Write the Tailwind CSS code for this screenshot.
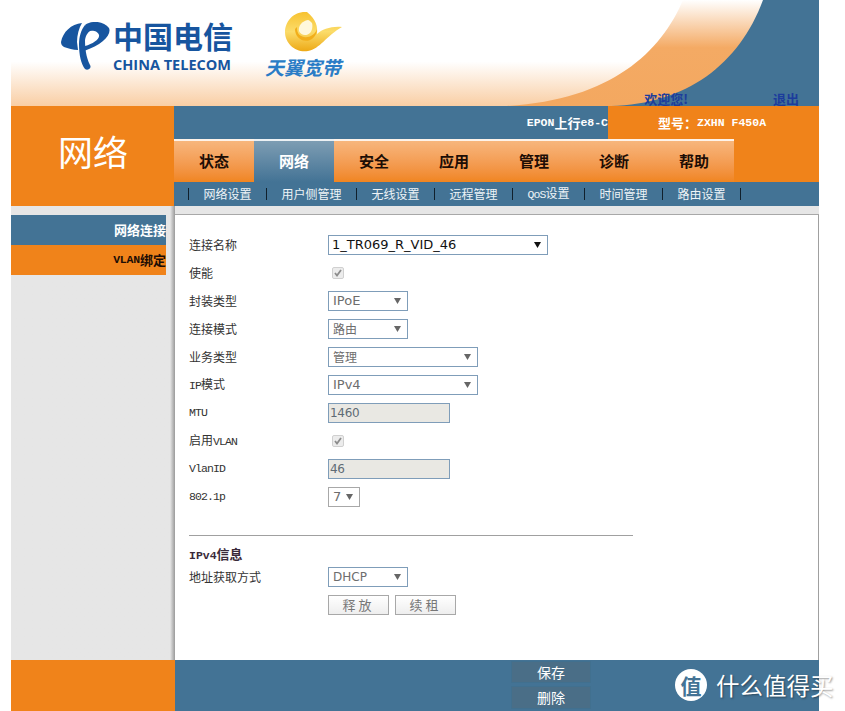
<!DOCTYPE html>
<html lang="zh-CN">

<head>
    <meta charset="UTF-8" />
    <title>网络连接</title>
    <script src="https://cdn.jsdelivr.net/npm/@tailwindcss/browser@4"></script>
</head>

<body class="bg-white h-[711px] overflow-hidden relative font-['Noto_Sans_CJK_SC',sans-serif]">
    <div class="ml-[11px] w-[808px] flex flex-col h-[711px]">

        <!-- header -->
        <div class="relative h-[106px] shrink-0 flex">
            <svg class="absolute inset-0" width="808" height="106" viewBox="0 0 808 106">
                <defs>
                    <linearGradient id="hdBg" x1="0" y1="0" x2="0" y2="1">
                        <stop offset="0.58" stop-color="#ffffff" />
                        <stop offset="1" stop-color="#f9cea4" />
                    </linearGradient>
                    <linearGradient id="hdBand" x1="0" y1="0" x2="0" y2="1">
                        <stop offset="0" stop-color="#ffffff" />
                        <stop offset="0.45" stop-color="#f4aa64" />
                        <stop offset="1" stop-color="#f3a860" />
                    </linearGradient>
                </defs>
                <rect width="808" height="106" fill="url(#hdBg)" />
                <path d="M496 106C600 100 650 52 672 0H808V106Z" fill="url(#hdBand)" />
                <path d="M600 106C675 104 728 65 752 0H808V106Z" fill="#437395" />
            </svg>
            <div class="relative flex items-start pl-[50px] pt-[15px]">
                <svg width="50" height="50" viewBox="61 22 50 50" class="mt-[7px]">
                    <g fill="#17559f">
                        <path d="M61 42C63 32 71 24 82 23C79 28 77 35 77 42L78 50C73 50 68 48 64 47C62 46 61 44 61 42Z" />
                        <path d="M85 25C81 30 79 37 79 44C79 55 81 64 85 69C88 71 92 68 90 65C86 57 85 48 85 40C86 34 89 31 92 30Z" />
                        <path d="M85 25C92 20 104 21 109 28C112 35 102 45 84 51L85 46C93 44 100 39 99 35C98 31 93 30 89 31Z" />
                    </g>
                </svg>
                <div class="ml-[2px] w-[118px]">
                    <div class="text-[30px] leading-[36px] font-bold text-[#17559f] whitespace-nowrap mt-[2px]">中国电信</div>
                    <div class="font-['Open_Sans'] text-[14.5px] leading-[14px] font-bold text-[#17559f] whitespace-nowrap mt-[5px] tracking-[0px]">CHINA TELECOM</div>
                </div>
                <div class="ml-[34px] -mt-[5px] flex flex-col w-[80px]">
                    <svg width="90" height="48" viewBox="0 5 90 48" class="-ml-[5px]">
                        <defs>
                            <linearGradient id="swirl" x1="0" y1="0" x2="0" y2="1">
                                <stop offset="0" stop-color="#f7c230" />
                                <stop offset="0.5" stop-color="#fbdc6a" />
                                <stop offset="1" stop-color="#eda916" />
                            </linearGradient>
                        </defs>
                        <path d="M47 7C33 6 25 17 25 27C25 39 36 48 48 46C60 44 66 31 82 22C72 21 62 24 57 29C58 22 56 14 47 7Z" fill="url(#swirl)" />
                        <path d="M48 15C42 16 38 21 39 26C41 31 47 31 50 28C52 26 53 21 52 18C50 16 49 15 48 15Z" fill="#fff8dc" />
                        <path d="M35 24C35 33 44 39 52 34C56 31 57 27 57 24C55 30 49 33 44 32C39 31 37 28 37 22Z" fill="#f2ae1a" />
                    </svg>
                    <div class="text-[19px] leading-[18px] font-bold italic text-[#2a7cc6] whitespace-nowrap">天翼宽带</div>
                </div>
            </div>
            <div class="absolute bottom-0 right-[20px] flex items-end text-[13px] leading-[15px] font-bold text-[#1c3c9c]">
                <span class="mr-[85px]">欢迎您!</span>
                <span>退出</span>
            </div>
        </div>

        <!-- title + main nav -->
        <div class="flex h-[100px] shrink-0">
            <div class="w-[163px] bg-[#f0831a] text-white text-[35px] leading-[48px] pl-[47px] pt-[21px] whitespace-nowrap">网络</div>
            <div class="w-[645px] flex flex-col">
                <div class="flex h-[33px] bg-[#437395] text-white text-[13px] font-bold">
                    <div class="w-[434px] flex items-center justify-end whitespace-nowrap"><span class="font-['Liberation_Mono'] text-[11.5px]">EPON</span>上行<span class="font-['Liberation_Mono'] text-[11.5px]">e8-C</span></div>
                    <div class="w-[211px] bg-[#f0831a] flex items-center pl-[50px] whitespace-nowrap">型号：<span class="font-['Liberation_Mono'] text-[11.5px]">ZXHN F450A</span></div>
                </div>
                <div class="flex h-[43px] bg-[#f0831a]">
                    <a class="w-[80px] flex items-center justify-center text-[15px] font-bold text-[#1d0d05] bg-gradient-to-b from-[#f7b67c] to-[#f0851f] border-t-2 border-white/90">状态</a>
                    <a class="w-[80px] flex items-center justify-center text-[15px] font-bold text-white bg-gradient-to-b from-[#7d9db3] to-[#437395] border-t-2 border-white/90">网络</a>
                    <a class="w-[80px] flex items-center justify-center text-[15px] font-bold text-[#1d0d05] bg-gradient-to-b from-[#f7b67c] to-[#f0851f] border-t-2 border-white/90">安全</a>
                    <a class="w-[80px] flex items-center justify-center text-[15px] font-bold text-[#1d0d05] bg-gradient-to-b from-[#f7b67c] to-[#f0851f] border-t-2 border-white/90">应用</a>
                    <a class="w-[80px] flex items-center justify-center text-[15px] font-bold text-[#1d0d05] bg-gradient-to-b from-[#f7b67c] to-[#f0851f] border-t-2 border-white/90">管理</a>
                    <a class="w-[80px] flex items-center justify-center text-[15px] font-bold text-[#1d0d05] bg-gradient-to-b from-[#f7b67c] to-[#f0851f] border-t-2 border-white/90">诊断</a>
                    <a class="w-[80px] flex items-center justify-center text-[15px] font-bold text-[#1d0d05] bg-gradient-to-b from-[#f7b67c] to-[#f0851f] border-t-2 border-white/90">帮助</a>
                </div>
                <div class="flex items-center h-[24px] bg-[#437395] pl-[14px] gap-x-[14.5px] text-[12px] text-[#eef3f7] whitespace-nowrap">
                    <span class="w-px h-[12px] bg-[#10202c]"></span><span>网络设置</span>
                    <span class="w-px h-[12px] bg-[#10202c]"></span><span>用户侧管理</span>
                    <span class="w-px h-[12px] bg-[#10202c]"></span><span>无线设置</span>
                    <span class="w-px h-[12px] bg-[#10202c]"></span><span>远程管理</span>
                    <span class="w-px h-[12px] bg-[#10202c]"></span><span><span class="font-['Liberation_Mono'] text-[11.5px] tracking-[-0.9px]">QoS</span>设置</span>
                    <span class="w-px h-[12px] bg-[#10202c]"></span><span>时间管理</span>
                    <span class="w-px h-[12px] bg-[#10202c]"></span><span>路由设置</span>
                    <span class="w-px h-[12px] bg-[#10202c]"></span>
                </div>
            </div>
        </div>

        <!-- sidebar + form -->
        <div class="flex h-[454px] shrink-0">
            <div class="w-[164px] pt-[9px] bg-gradient-to-r from-[#e6e6e6] from-[97%] to-[#9a9a9a]">
                <div class="w-[155px] h-[30px] bg-[#437395] flex items-center justify-end text-[13px] font-bold text-white">网络连接</div>
                <div class="w-[155px] h-[30px] bg-[#f0831a] flex items-center justify-end text-[13px] font-bold text-[#1d0d05]"><span class="font-['Liberation_Mono'] text-[11.5px] tracking-[-0.2px]">VLAN</span>绑定</div>
            </div>
            <div class="w-[644px] flex flex-col">
                <div class="h-[9px] shrink-0 bg-[#e6e6e6] border-b border-[#a8a8a8]"></div>
                <div class="flex-1 bg-white border-r border-[#a0a0a0] pl-[14px] pt-[16px] text-[12px] text-[#333]">
                    <div class="flex items-center h-[28px]">
                        <label class="w-[139px]">连接名称</label>
                        <div class="relative w-[220px] h-[20px]">
                            <select class="appearance-none w-full h-full rounded-none border border-[#7f9db9] bg-white pl-[3px] font-['DejaVu_Sans'] text-[13px] leading-[18px] text-[#111]">
                                <option>1_TR069_R_VID_46</option>
                            </select>
                            <svg class="absolute right-[7px] top-[7px]" width="7" height="6" viewBox="0 0 7 6"><path d="M0 0H7L3.5 6Z" fill="#111" /></svg>
                        </div>
                    </div>
                    <div class="flex items-center h-[28px]">
                        <label class="w-[143px]">使能</label>
                        <span class="relative w-[12px] h-[12px] flex">
                            <input type="checkbox" checked disabled class="appearance-none w-[12px] h-[12px] rounded-[2px] border border-[#d0d0d0] bg-[#ececec]" />
                            <svg class="absolute left-[2px] top-[2px]" width="8" height="8" viewBox="0 0 8 8"><path d="M1 4L3 6.5L7 1" fill="none" stroke="#8c8c8c" stroke-width="1.8" /></svg>
                        </span>
                    </div>
                    <div class="flex items-center h-[28px]">
                        <label class="w-[139px]">封装类型</label>
                        <div class="relative w-[80px] h-[20px]">
                            <select class="appearance-none w-full h-full rounded-none border border-[#7f9db9] bg-white pl-[4px] font-['DejaVu_Sans'] text-[13px] leading-[18px] text-[#6d6d6d]">
                                <option>IPoE</option>
                            </select>
                            <svg class="absolute right-[7px] top-[7px]" width="7" height="6" viewBox="0 0 7 6"><path d="M0 0H7L3.5 6Z" fill="#666" /></svg>
                        </div>
                    </div>
                    <div class="flex items-center h-[28px]">
                        <label class="w-[139px]">连接模式</label>
                        <div class="relative w-[80px] h-[20px]">
                            <select class="appearance-none w-full h-full rounded-none border border-[#7f9db9] bg-white pl-[4px] text-[12px] leading-[18px] text-[#6d6d6d]">
                                <option>路由</option>
                            </select>
                            <svg class="absolute right-[7px] top-[7px]" width="7" height="6" viewBox="0 0 7 6"><path d="M0 0H7L3.5 6Z" fill="#666" /></svg>
                        </div>
                    </div>
                    <div class="flex items-center h-[28px]">
                        <label class="w-[139px]">业务类型</label>
                        <div class="relative w-[150px] h-[20px]">
                            <select class="appearance-none w-full h-full rounded-none border border-[#7f9db9] bg-white pl-[4px] text-[12px] leading-[18px] text-[#6d6d6d]">
                                <option>管理</option>
                            </select>
                            <svg class="absolute right-[7px] top-[7px]" width="7" height="6" viewBox="0 0 7 6"><path d="M0 0H7L3.5 6Z" fill="#666" /></svg>
                        </div>
                    </div>
                    <div class="flex items-center h-[28px]">
                        <label class="w-[139px]"><span class="font-['Liberation_Mono'] text-[11.5px] tracking-[-0.9px]">IP</span>模式</label>
                        <div class="relative w-[150px] h-[20px]">
                            <select class="appearance-none w-full h-full rounded-none border border-[#7f9db9] bg-white pl-[4px] font-['DejaVu_Sans'] text-[13px] leading-[18px] text-[#6d6d6d]">
                                <option>IPv4</option>
                            </select>
                            <svg class="absolute right-[7px] top-[7px]" width="7" height="6" viewBox="0 0 7 6"><path d="M0 0H7L3.5 6Z" fill="#666" /></svg>
                        </div>
                    </div>
                    <div class="flex items-center h-[28px]">
                        <label class="w-[139px] font-['Liberation_Mono'] text-[11.5px] tracking-[-0.9px]">MTU</label>
                        <input value="1460" disabled class="w-[122px] h-[20px] border border-[#7f9db9] bg-[#e9e8e3] pl-[1px] font-['DejaVu_Sans'] text-[12px] tracking-[-0.3px] text-[#5f6b75]" />
                    </div>
                    <div class="flex items-center h-[28px]">
                        <label class="w-[143px]">启用<span class="font-['Liberation_Mono'] text-[11.5px] tracking-[-0.9px]">VLAN</span></label>
                        <span class="relative w-[12px] h-[12px] flex">
                            <input type="checkbox" checked disabled class="appearance-none w-[12px] h-[12px] rounded-[2px] border border-[#d0d0d0] bg-[#ececec]" />
                            <svg class="absolute left-[2px] top-[2px]" width="8" height="8" viewBox="0 0 8 8"><path d="M1 4L3 6.5L7 1" fill="none" stroke="#8c8c8c" stroke-width="1.8" /></svg>
                        </span>
                    </div>
                    <div class="flex items-center h-[28px]">
                        <label class="w-[139px] font-['Liberation_Mono'] text-[11.5px] tracking-[-0.9px]">VlanID</label>
                        <input value="46" disabled class="w-[122px] h-[20px] border border-[#7f9db9] bg-[#e9e8e3] pl-[1px] font-['DejaVu_Sans'] text-[12px] tracking-[-0.3px] text-[#5f6b75]" />
                    </div>
                    <div class="flex items-center h-[28px]">
                        <label class="w-[139px] font-['Liberation_Mono'] text-[11.5px] tracking-[-0.9px]">802.1p</label>
                        <div class="relative w-[32px] h-[20px]">
                            <select class="appearance-none w-full h-full rounded-none border border-[#a8a8a8] bg-white pl-[4px] font-['DejaVu_Sans'] text-[13px] leading-[18px] text-[#6d6d6d]">
                                <option>7</option>
                            </select>
                            <svg class="absolute right-[7px] top-[7px]" width="7" height="6" viewBox="0 0 7 6"><path d="M0 0H7L3.5 6Z" fill="#666" /></svg>
                        </div>
                    </div>

                    <div class="w-[444px] h-px bg-[#a0a0a0] mt-[24px]"></div>
                    <div class="mt-[11px] h-[14px] leading-[14px] font-bold text-[13px] text-[#3a2a3a]"><span class="font-['Liberation_Mono'] text-[11.5px]">IPv4</span>信息</div>
                    <div class="flex items-center h-[20px] mt-[6px]">
                        <label class="w-[139px]">地址获取方式</label>
                        <div class="relative w-[80px] h-[20px]">
                            <select class="appearance-none w-full h-full rounded-none border border-[#7f9db9] bg-white pl-[4px] font-['DejaVu_Sans'] text-[12px] leading-[18px] text-[#6d6d6d]">
                                <option>DHCP</option>
                            </select>
                            <svg class="absolute right-[7px] top-[7px]" width="7" height="6" viewBox="0 0 7 6"><path d="M0 0H7L3.5 6Z" fill="#666" /></svg>
                        </div>
                    </div>
                    <div class="flex gap-x-[6px] ml-[139px] mt-[8px]">
                        <button class="w-[61px] h-[20px] border border-[#a8a8a8] bg-gradient-to-b from-white to-[#eeeeee] text-[13px] leading-[18px] text-[#777] tracking-[3px]">释放</button>
                        <button class="w-[61px] h-[20px] border border-[#a8a8a8] bg-gradient-to-b from-white to-[#eeeeee] text-[13px] leading-[18px] text-[#777] tracking-[3px]">续租</button>
                    </div>
                </div>
            </div>
        </div>

        <!-- footer -->
        <div class="flex h-[51px] shrink-0">
            <div class="w-[164px] bg-[#f0831a]"></div>
            <div class="flex-1 bg-[#437395] flex flex-col items-start pl-[336px] pt-[1px] gap-y-[3px]">
                <button class="w-[80px] h-[22px] bg-[#4a6e87] border border-[#41708f] text-[14px] leading-[18px] text-white">保存</button>
                <button class="w-[80px] h-[23px] bg-[#4a6e87] border border-[#41708f] text-[14px] leading-[19px] text-white">删除</button>
            </div>
        </div>
    </div>

    <!-- watermark over the page -->
    <div class="absolute left-[675px] top-[669px] flex items-center">
        <span class="w-[32px] h-[32px] rounded-full bg-white flex items-center justify-center text-[21px] leading-none font-bold text-[#437395]">值</span>
        <span class="ml-[9px] text-[23.5px] leading-[32px] text-white whitespace-nowrap [text-shadow:1px_1px_2px_rgba(0,0,0,0.4)]">什么值得买</span>
    </div>
</body>

</html>
